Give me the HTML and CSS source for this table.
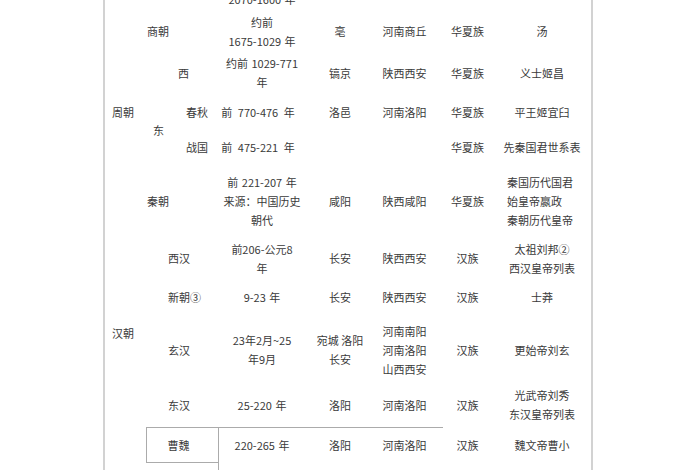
FILE: index.html
```html
<!DOCTYPE html>
<html lang="zh">
<head>
<meta charset="utf-8">
<title>中国历代朝代表</title>
<link rel="stylesheet" href="styles.css">
</head>
<body>
<div class="chart">
  <!-- 夏朝 -->
  <div class="cell sub left1 r-xia">夏朝</div>
  <div class="cell date r-xia">约前<br>2070-1600 年</div>
  <div class="cell cap r-xia">阳城</div>
  <div class="cell prov r-xia">河南登封</div>
  <div class="cell eth r-xia">华夏族</div>
  <div class="cell ruler r-xia">禹</div>

  <!-- 商朝 -->
  <div class="cell sub left1 r-shang">商朝</div>
  <div class="cell date r-shang">约前<br>1675-1029 年</div>
  <div class="cell cap r-shang">亳</div>
  <div class="cell prov r-shang">河南商丘</div>
  <div class="cell eth r-shang">华夏族</div>
  <div class="cell ruler r-shang">汤</div>

  <!-- 周朝 -->
  <div class="cell dyn r-chunqiu">周朝</div>
  <div class="cell sub xi r-xizhou">西</div>
  <div class="cell date r-xizhou">约前 1029-771<br>年</div>
  <div class="cell cap r-xizhou">镐京</div>
  <div class="cell prov r-xizhou">陕西西安</div>
  <div class="cell eth r-xizhou">华夏族</div>
  <div class="cell ruler r-xizhou">义士姬昌</div>

  <div class="cell sub dong r-dong">东</div>
  <div class="cell sub right r-chunqiu">春秋</div>
  <div class="cell date wide r-chunqiu">前 770-476 年</div>
  <div class="cell cap r-chunqiu">洛邑</div>
  <div class="cell prov r-chunqiu">河南洛阳</div>
  <div class="cell eth r-chunqiu">华夏族</div>
  <div class="cell ruler r-chunqiu">平王姬宜臼</div>

  <div class="cell sub right r-zhanguo">战国</div>
  <div class="cell date wide r-zhanguo">前 475-221 年</div>
  <div class="cell eth r-zhanguo">华夏族</div>
  <div class="cell ruler r-zhanguo">先秦国君世系表</div>

  <!-- 秦朝 -->
  <div class="cell sub left1 r-qin">秦朝</div>
  <div class="cell date r-qin">前 221-207 年<br>来源：中国历史<br>朝代</div>
  <div class="cell cap r-qin">咸阳</div>
  <div class="cell prov r-qin">陕西咸阳</div>
  <div class="cell eth r-qin">华夏族</div>
  <div class="cell ruler leftalign r-qin">秦国历代国君<br>始皇帝嬴政<br>秦朝历代皇帝</div>

  <!-- 汉朝 -->
  <div class="cell dyn r-han">汉朝</div>
  <div class="cell sub han r-xihan">西汉</div>
  <div class="cell date r-xihan">前206-公元8<br>年</div>
  <div class="cell cap r-xihan">长安</div>
  <div class="cell prov r-xihan">陕西西安</div>
  <div class="cell eth r-xihan">汉族</div>
  <div class="cell ruler r-xihan">太祖刘邦②<br>西汉皇帝列表</div>

  <div class="cell sub han r-xin">新朝③</div>
  <div class="cell date r-xin">9-23 年</div>
  <div class="cell cap r-xin">长安</div>
  <div class="cell prov r-xin">陕西西安</div>
  <div class="cell eth r-xin">汉族</div>
  <div class="cell ruler r-xin">士莽</div>

  <div class="cell sub han r-xuan">玄汉</div>
  <div class="cell date r-xuan">23年2月~25<br>年9月</div>
  <div class="cell cap r-xuan">宛城 洛阳<br>长安</div>
  <div class="cell prov r-xuan">河南南阳<br>河南洛阳<br>山西西安</div>
  <div class="cell eth r-xuan">汉族</div>
  <div class="cell ruler r-xuan">更始帝刘玄</div>

  <div class="cell sub han r-donghan">东汉</div>
  <div class="cell date r-donghan">25-220 年</div>
  <div class="cell cap r-donghan">洛阳</div>
  <div class="cell prov r-donghan">河南洛阳</div>
  <div class="cell eth r-donghan">汉族</div>
  <div class="cell ruler r-donghan">光武帝刘秀<br>东汉皇帝列表</div>

  <!-- 三国 -->
  <div class="rule r-caowei"></div>
  <div class="cell sub box r-caowei">曹魏</div>
  <div class="cell date r-caowei">220-265 年</div>
  <div class="cell cap r-caowei">洛阳</div>
  <div class="cell prov r-caowei">河南洛阳</div>
  <div class="cell eth r-caowei">汉族</div>
  <div class="cell ruler r-caowei">魏文帝曹小</div>

  <div class="cell sub edge r-shu">蜀汉</div>
  <div class="cell date r-shu">221-263 年</div>
  <div class="cell cap r-shu">成都</div>
  <div class="cell prov r-shu">四川成都</div>
  <div class="cell eth r-shu">汉族</div>
  <div class="cell ruler r-shu">刘备</div>
</div>
</body>
</html>
```

FILE: styles.css
```css
html, body {
  margin: 0;
  padding: 0;
  background: #ffffff;
  overflow: hidden;
}

body {
  font-family: "Noto Sans CJK SC", "Noto Sans", sans-serif;
  font-size: 11px;
  color: #3a3a3a;
}

.chart {
  margin-top: -30px;
  margin-left: 103px;
  width: 486px;
  border-left: 2px solid #d2d2d2;
  border-right: 2px solid #d2d2d2;
  display: grid;
  grid-template-columns: 41px 73px 86px 70px 59px 67px 82px 8px;
  grid-template-rows: 40px 43px 40px 39px 30px 78px 37px 40px 66px 44px 36px 40px;
}

.cell {
  display: flex;
  align-items: center;
  justify-content: center;
  text-align: center;
  line-height: 19px;
  white-space: nowrap;
  box-sizing: border-box;
}

/* columns */
.dyn { grid-column: 1; justify-content: flex-start; padding-left: 7px; }
.sub { grid-column: 2; }
.date { grid-column: 3; word-spacing: 1px; }
.cap { grid-column: 4; }
.prov { grid-column: 5; }
.eth { grid-column: 6; }
.ruler { grid-column: 7; }

.date.wide { word-spacing: 3px; padding-right: 8px; }

.sub.left1 { justify-content: flex-start; padding-left: 1px; }
.sub.xi { justify-content: flex-start; padding-left: 32px; }
.sub.dong { justify-content: flex-start; padding-left: 7px; padding-top: 5px; }
.sub.right { justify-content: flex-end; padding-right: 11px; }
.sub.han { justify-content: flex-start; padding-left: 22px; }
.sub.box {
  border: 1px solid #ababab;
  padding-right: 8px;
}
.sub.edge { border-right: 1px solid #ababab; }

.ruler.leftalign { justify-content: flex-start; text-align: left; padding-left: 6px; }

.rule {
  grid-column: 2 / 7;
  align-self: start;
  width: 297px;
  height: 0;
  border-top: 1px solid #ababab;
}

/* rows */
.r-xia { grid-row: 1; }
.r-shang { grid-row: 2; }
.r-xizhou { grid-row: 3; }
.r-chunqiu { grid-row: 4; }
.r-zhanguo { grid-row: 5; }
.r-dong { grid-row: 4 / 6; }
.r-qin { grid-row: 6; }
.r-xihan { grid-row: 7; }
.r-xin { grid-row: 8; }
.r-xuan { grid-row: 9; }
.r-donghan { grid-row: 10; }
.r-han { grid-row: 7 / 11; }
.r-caowei { grid-row: 11; }
.r-shu { grid-row: 12; }
```
